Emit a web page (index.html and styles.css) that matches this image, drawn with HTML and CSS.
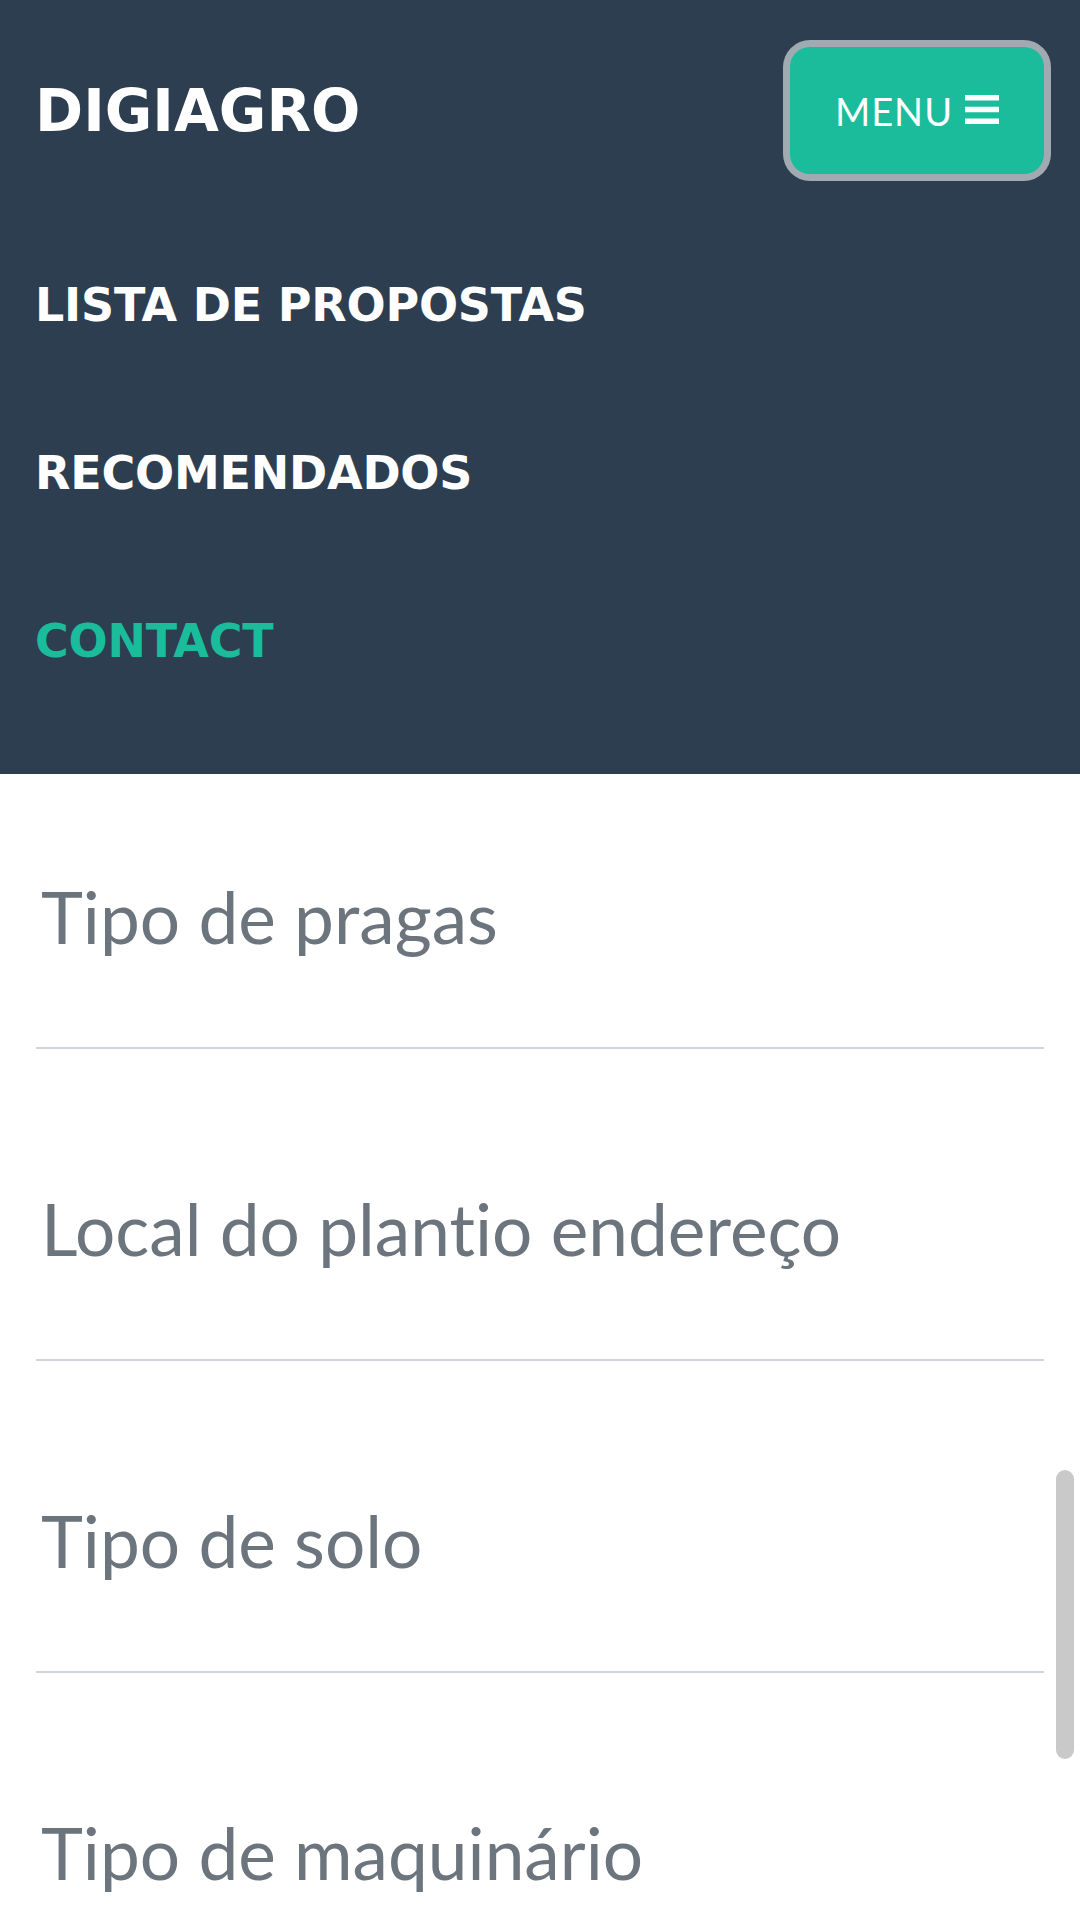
FILE: index.html
```html
<!DOCTYPE html>
<html lang="pt">
<head>
<meta charset="utf-8">
<title>DIGIAGRO</title>
<link rel="stylesheet" href="styles.css">
</head>
<body>
<header class="navbar">
  <div class="brand-row">
    <a class="brand" href="#">DIGIAGRO</a>
    <button class="toggler" type="button">
      <span class="toggler-label">MENU</span>
      <svg class="toggler-icon" width="34" height="29" viewBox="0 0 34 29" aria-hidden="true">
        <rect x="0" y="0" width="34" height="5.5" fill="#fff"/>
        <rect x="0" y="11.75" width="34" height="5.5" fill="#fff"/>
        <rect x="0" y="23.5" width="34" height="5.5" fill="#fff"/>
      </svg>
    </button>
  </div>
  <ul class="nav-list">
    <li><a class="nav-link" href="#">LISTA DE PROPOSTAS</a></li>
    <li><a class="nav-link" href="#">RECOMENDADOS</a></li>
    <li><a class="nav-link nav-link-active" href="#">CONTACT</a></li>
  </ul>
</header>
<main class="form">
  <div class="field field-first"><span class="placeholder">Tipo de pragas</span></div>
  <div class="field"><span class="placeholder">Local do plantio endereço</span></div>
  <div class="field"><span class="placeholder">Tipo de solo</span></div>
  <div class="field"><span class="placeholder">Tipo de maquinário</span></div>
</main>
<div class="scrollbar"></div>
</body>
</html>
```

FILE: styles.css
```css
html, body {
  margin: 0;
  padding: 0;
  height: 1920px;
  overflow: hidden;
  background: #fff;
}

.navbar {
  background: #2c3e50;
  height: 774px;
  box-sizing: border-box;
  padding: 47px 36px 0 35px;
}

.brand-row {
  display: flex;
  justify-content: space-between;
  align-items: center;
  height: 127px;
}

.brand {
  font-family: "DejaVu Sans", sans-serif;
  font-weight: 700;
  font-size: 58px;
  line-height: 1;
  color: #fff;
  text-decoration: none;
}

.toggler {
  width: 254px;
  height: 127px;
  padding: 0;
  border: 0;
  border-radius: 20px;
  background: #1abc9c;
  box-shadow: 0 0 0 7px #a1a9b1;
  display: flex;
  align-items: center;
  justify-content: center;
  gap: 12px;
  font-family: "Lato", sans-serif;
  font-weight: 400;
  font-size: 38px;
  letter-spacing: 1px;
  color: #fff;
}

.toggler-label {
  line-height: 1;
}

.toggler-icon {
  display: block;
  margin-top: -2px;
}

.nav-list {
  list-style: none;
  margin: 47px 0 0;
  padding: 0;
}

.nav-link {
  display: block;
  height: 168px;
  line-height: 168px;
  font-family: "DejaVu Sans", sans-serif;
  font-weight: 700;
  font-size: 46px;
  letter-spacing: -0.2px;
  color: #fff;
  text-decoration: none;
}

.nav-link-active {
  color: #1abc9c;
}

.form {
  padding: 0 36px;
}

.field {
  padding: 137px 0 87px 5px;
  border-bottom: 2px solid #ced4da;
  font-family: "Lato", sans-serif;
  font-size: 71.2px;
  line-height: 86px;
  font-variant-ligatures: none;
  font-feature-settings: "liga" 0;
  color: #6c757d;
  white-space: nowrap;
}

.field-first {
  padding-top: 100px;
}

.scrollbar {
  position: fixed;
  top: 1470px;
  right: 6px;
  width: 18px;
  height: 289px;
  border-radius: 9px;
  background: #c9c9c9;
}
```
